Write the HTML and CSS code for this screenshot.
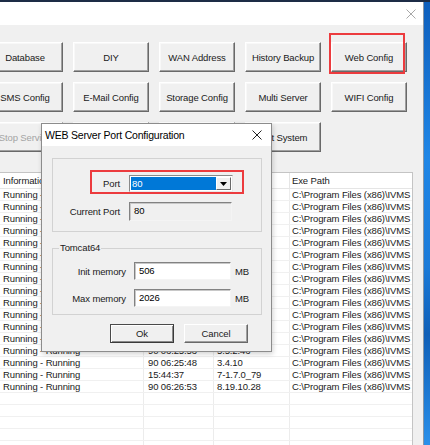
FILE: index.html
```html
<!DOCTYPE html>
<html>
<head>
<meta charset="utf-8">
<link rel="stylesheet" href="styles.css">
</head>
<body>
<div class="topline"></div>
<div class="screen">
  <div class="window">
    <div class="titlebar">
      <svg class="x-icon" width="10" height="10" viewBox="0 0 10 10"><path d="M0.5 0.5L9.5 9.5M9.5 0.5L0.5 9.5" stroke="#a8a8a8" stroke-width="1"/></svg>
    </div>
    <div class="main">
      <div class="btn-grid">
        <div class="btn">Database</div>
        <div class="btn">DIY</div>
        <div class="btn">WAN Address</div>
        <div class="btn">History Backup</div>
        <div class="btn">Web Config</div>
        <div class="btn">SMS Config</div>
        <div class="btn">E-Mail Config</div>
        <div class="btn">Storage Config</div>
        <div class="btn">Multi Server</div>
        <div class="btn">WIFI Config</div>
        <div class="btn disabled">Stop Service</div>
        <div class="btn">Start Service</div>
        <div class="btn">Restart Service</div>
        <div class="btn">Exit System</div>
      </div>
      <div class="list">
        <div class="row head">
          <div class="c c1">Information</div>
          <div class="c c2">Run Time</div>
          <div class="c c3">Version</div>
          <div class="c c4">Exe Path</div>
        </div>
        <div class="row"><div class="c c1">Running - Running</div><div class="c c2">90 06:25:41</div><div class="c c3">4.3.1.13</div><div class="c c4">C:\Program Files (x86)\IVMS</div></div>
        <div class="row"><div class="c c1">Running - Running</div><div class="c c2">90 06:25:42</div><div class="c c3">4.3.1.13</div><div class="c c4">C:\Program Files (x86)\IVMS</div></div>
        <div class="row"><div class="c c1">Running - Running</div><div class="c c2">90 06:25:42</div><div class="c c3">4.3.1.13</div><div class="c c4">C:\Program Files (x86)\IVMS</div></div>
        <div class="row"><div class="c c1">Running - Running</div><div class="c c2">90 06:25:43</div><div class="c c3">4.3.1.13</div><div class="c c4">C:\Program Files (x86)\IVMS</div></div>
        <div class="row"><div class="c c1">Running - Running</div><div class="c c2">90 06:25:44</div><div class="c c3">4.3.1.13</div><div class="c c4">C:\Program Files (x86)\IVMS</div></div>
        <div class="row"><div class="c c1">Running - Running</div><div class="c c2">90 06:25:44</div><div class="c c3">4.3.1.13</div><div class="c c4">C:\Program Files (x86)\IVMS</div></div>
        <div class="row"><div class="c c1">Running - Running</div><div class="c c2">90 06:25:45</div><div class="c c3">4.3.1.13</div><div class="c c4">C:\Program Files (x86)\IVMS</div></div>
        <div class="row"><div class="c c1">Running - Running</div><div class="c c2">90 06:25:46</div><div class="c c3">4.3.1.13</div><div class="c c4">C:\Program Files (x86)\IVMS</div></div>
        <div class="row"><div class="c c1">Running - Running</div><div class="c c2">90 06:25:46</div><div class="c c3">4.3.1.13</div><div class="c c4">C:\Program Files (x86)\IVMS</div></div>
        <div class="row"><div class="c c1">Running - Running</div><div class="c c2">90 06:25:47</div><div class="c c3">4.3.1.13</div><div class="c c4">C:\Program Files (x86)\IVMS</div></div>
        <div class="row"><div class="c c1">Running - Running</div><div class="c c2">90 06:25:47</div><div class="c c3">4.3.1.13</div><div class="c c4">C:\Program Files (x86)\IVMS</div></div>
        <div class="row"><div class="c c1">Running - Running</div><div class="c c2">90 06:25:50</div><div class="c c3">4.3.1.13</div><div class="c c4">C:\Program Files (x86)\IVMS</div></div>
        <div class="row"><div class="c c1">Running - Running</div><div class="c c2">90 06:25:51</div><div class="c c3">4.3.1.13</div><div class="c c4">C:\Program Files (x86)\IVMS</div></div>
        <div class="row"><div class="c c1">Running - Running</div><div class="c c2">90 06:25:53</div><div class="c c3">5.5.2.46</div><div class="c c4">C:\Program Files (x86)\IVMS</div></div>
        <div class="row"><div class="c c1">Running - Running</div><div class="c c2">90 06:25:48</div><div class="c c3">3.4.10</div><div class="c c4">C:\Program Files (x86)\IVMS</div></div>
        <div class="row"><div class="c c1">Running - Running</div><div class="c c2">15:44:37</div><div class="c c3">7-1.7.0_79</div><div class="c c4">C:\Program Files (x86)\IVMS</div></div>
        <div class="row"><div class="c c1">Running - Running</div><div class="c c2">90 06:26:53</div><div class="c c3">8.19.10.28</div><div class="c c4">C:\Program Files (x86)\IVMS</div></div>
        <div class="row"><div class="c c1"></div><div class="c c2"></div><div class="c c3"></div><div class="c c4"></div></div>
        <div class="row"><div class="c c1"></div><div class="c c2"></div><div class="c c3"></div><div class="c c4"></div></div>
        <div class="row"><div class="c c1"></div><div class="c c2"></div><div class="c c3"></div><div class="c c4"></div></div>
        <div class="row"><div class="c c1"></div><div class="c c2"></div><div class="c c3"></div><div class="c c4"></div></div>
        <div class="row"><div class="c c1"></div><div class="c c2"></div><div class="c c3"></div><div class="c c4"></div></div>
      </div>
    </div>
  </div>
  <div class="desktop"></div>
</div>

<div class="mark mark-web"></div>

<div class="dialog">
  <div class="dlg-title">
    <span class="dlg-caption">WEB Server Port Configuration</span>
    <svg width="10" height="10" viewBox="0 0 10 10"><path d="M0.5 0.5L9.5 9.5M9.5 0.5L0.5 9.5" stroke="#222" stroke-width="1"/></svg>
  </div>
  <div class="dlg-body">
    <div class="group g1">
      <div class="g1-grid">
        <div class="lbl">Port</div>
        <div class="combo">
          <div class="combo-sel">80</div>
          <div class="combo-btn"><svg width="7" height="4" viewBox="0 0 7 4"><path d="M0 0H7L3.5 4Z" fill="#000"/></svg></div>
        </div>
        <div class="lbl">Current Port</div>
        <div class="field ro">80</div>
      </div>
    </div>
    <div class="group g2">
      <div class="legend">Tomcat64</div>
      <div class="g2-grid">
        <div class="lbl">Init memory</div>
        <div class="field">506</div>
        <div class="unit">MB</div>
        <div class="lbl">Max memory</div>
        <div class="field">2026</div>
        <div class="unit">MB</div>
      </div>
    </div>
    <div class="dlg-buttons">
      <div class="dbtn def">Ok</div>
      <div class="dbtn">Cancel</div>
    </div>
  </div>
  <div class="mark mark-port"></div>
</div>
</body>
</html>
```

FILE: styles.css
```css
html, body {
  margin: 0;
  padding: 0;
}
body {
  width: 430px;
  height: 445px;
  overflow: hidden;
  position: relative;
  font-family: "Liberation Sans", Arial, sans-serif;
  font-size: 9.5px;
  letter-spacing: -0.12px;
  color: #000;
  background: #1a73d0;
}
.topline {
  height: 2px;
  background: #1d2c46;
}
.screen {
  display: flex;
  height: 443px;
}
.window {
  flex: none;
  width: 423px;
  border-right: 1px solid #8a96a4;
  background: #f0f0f0;
  display: flex;
  flex-direction: column;
  overflow: hidden;
}
.desktop {
  flex: 1;
  background: linear-gradient(#0e5fbd, #1f86e6 35%, #1b7ad8 60%, #0f5fb8 75%, #2a90ea);
}
.titlebar {
  height: 23px;
  flex: none;
  background: #fff;
  display: flex;
  align-items: center;
  justify-content: flex-end;
  padding-right: 7px;
}
.main {
  flex: 1;
  padding-top: 17px;
  overflow: hidden;
}
.btn-grid {
  display: grid;
  grid-template-columns: repeat(5, 76px);
  grid-auto-rows: 30px;
  gap: 10px;
  margin-left: -13px;
}
.btn {
  box-sizing: border-box;
  border: 1px solid;
  border-color: #fff #696969 #696969 #fff;
  box-shadow: inset -1px -1px #a0a0a0, inset 1px 1px #f8f8f8;
  background: #f0f0f0;
  display: flex;
  align-items: center;
  justify-content: center;
  white-space: nowrap;
  color: #1a1a1a;
}
.btn.disabled {
  color: #a4a4a4;
}
.list {
  margin-top: 20px;
  margin-left: -1px;
  width: 414px;
  box-sizing: border-box;
  border: 1px solid #c4c4c4;
  border-bottom: none;
  background: #fff;
}
.row {
  display: grid;
  grid-template-columns: 144px 70px 76px 122px;
  height: 12px;
  box-sizing: border-box;
  border-bottom: 1px solid #f0f0f0;
  line-height: 11px;
  color: #1a1a1a;
}
.row.head {
  height: 16px;
  line-height: 15px;
  border-bottom: 1px solid #e5e5e5;
}
.c {
  box-sizing: border-box;
  border-right: 1px solid #ececec;
  white-space: nowrap;
  overflow: hidden;
}
.head .c {
  border-right-color: #e5e5e5;
}
.c1 { padding-left: 3px; }
.c2 { padding-left: 4px; }
.c3 { padding-left: 3px; }
.c4 { padding-left: 2px; border-right: none; }

.mark {
  position: absolute;
  box-sizing: border-box;
  border: 2px solid #ec3b3e;
}
.mark-web {
  left: 329px;
  top: 33px;
  width: 76px;
  height: 41px;
}

/* dialog */
.dialog {
  position: absolute;
  left: 41px;
  top: 123px;
  width: 231px;
  height: 229px;
  box-sizing: border-box;
  border: 1px solid #8c8c8c;
  background: #f0f0f0;
  box-shadow: 1px 2px 5px rgba(0, 0, 0, 0.18);
}
.dlg-title {
  height: 21px;
  background: #fff;
  display: flex;
  align-items: center;
  justify-content: space-between;
  padding: 0 9px 1px 3px;
}
.dlg-caption {
  font-size: 10.5px;
  letter-spacing: -0.2px;
  color: #000;
}
.dlg-body {
  padding: 0 9px 0 10px;
}
.group {
  box-sizing: border-box;
  border: 1px solid #d2d2d2;
  position: relative;
}
.g1 {
  margin-top: 12px;
  height: 74px;
  padding-top: 16px;
}
.g1-grid {
  display: grid;
  grid-template-columns: 67px 104px;
  grid-template-rows: 17px 19px;
  column-gap: 9px;
  row-gap: 10px;
  align-items: center;
}
.lbl {
  text-align: right;
  white-space: nowrap;
  color: #1a1a1a;
}
.combo {
  height: 17px;
  box-sizing: border-box;
  border: 1px solid;
  border-color: #8a8a8a #e8e8e8 #e8e8e8 #8a8a8a;
  background: #fff;
  display: flex;
  padding: 1px;
}
.combo-sel {
  flex: 1;
  background: #0078d7;
  color: #fff;
  line-height: 13px;
  padding-left: 1px;
}
.combo-btn {
  width: 15px;
  box-sizing: border-box;
  border: 1px solid;
  border-color: #fff #696969 #696969 #fff;
  background: #f0f0f0;
  display: flex;
  align-items: center;
  justify-content: center;
}
.field {
  box-sizing: border-box;
  height: 18px;
  border: 1px solid;
  border-color: #828282 #f4f4f4 #f4f4f4 #828282;
  box-shadow: inset 1px 1px #c8c8c8;
  background: #fff;
  padding: 2px 0 0 4px;
  line-height: 12px;
}
.field.ro {
  height: 19px;
  width: 103px;
  background: #f0f0f0;
}
.g2 {
  margin-top: 16px;
  height: 67px;
  padding-top: 13px;
}
.legend {
  position: absolute;
  left: 6px;
  top: -7px;
  padding: 0 1px;
  background: #f0f0f0;
  line-height: 12px;
  color: #1a1a1a;
}
.g2-grid {
  display: grid;
  grid-template-columns: 73px 97px auto;
  grid-template-rows: 18px 18px;
  column-gap: 8px;
  row-gap: 9px;
  align-items: center;
}
.g2-grid .unit {
  margin-left: -4px;
  color: #1a1a1a;
}
.dlg-buttons {
  display: flex;
  gap: 10px;
  margin-top: 9px;
  padding-left: 58px;
}
.dbtn {
  width: 64px;
  height: 19px;
  box-sizing: border-box;
  border: 1px solid;
  border-color: #fff #696969 #696969 #fff;
  box-shadow: inset -1px -1px #a0a0a0;
  background: #f0f0f0;
  display: flex;
  align-items: center;
  justify-content: center;
  color: #1a1a1a;
}
.dbtn.def {
  border-color: #4a4a4a #3a3a3a #3a3a3a #4a4a4a;
  box-shadow: inset 1px 1px #fff, inset -1px -1px #8a8a8a;
}
.mark-port {
  left: 48px;
  top: 46px;
  width: 154px;
  height: 24px;
}
```
